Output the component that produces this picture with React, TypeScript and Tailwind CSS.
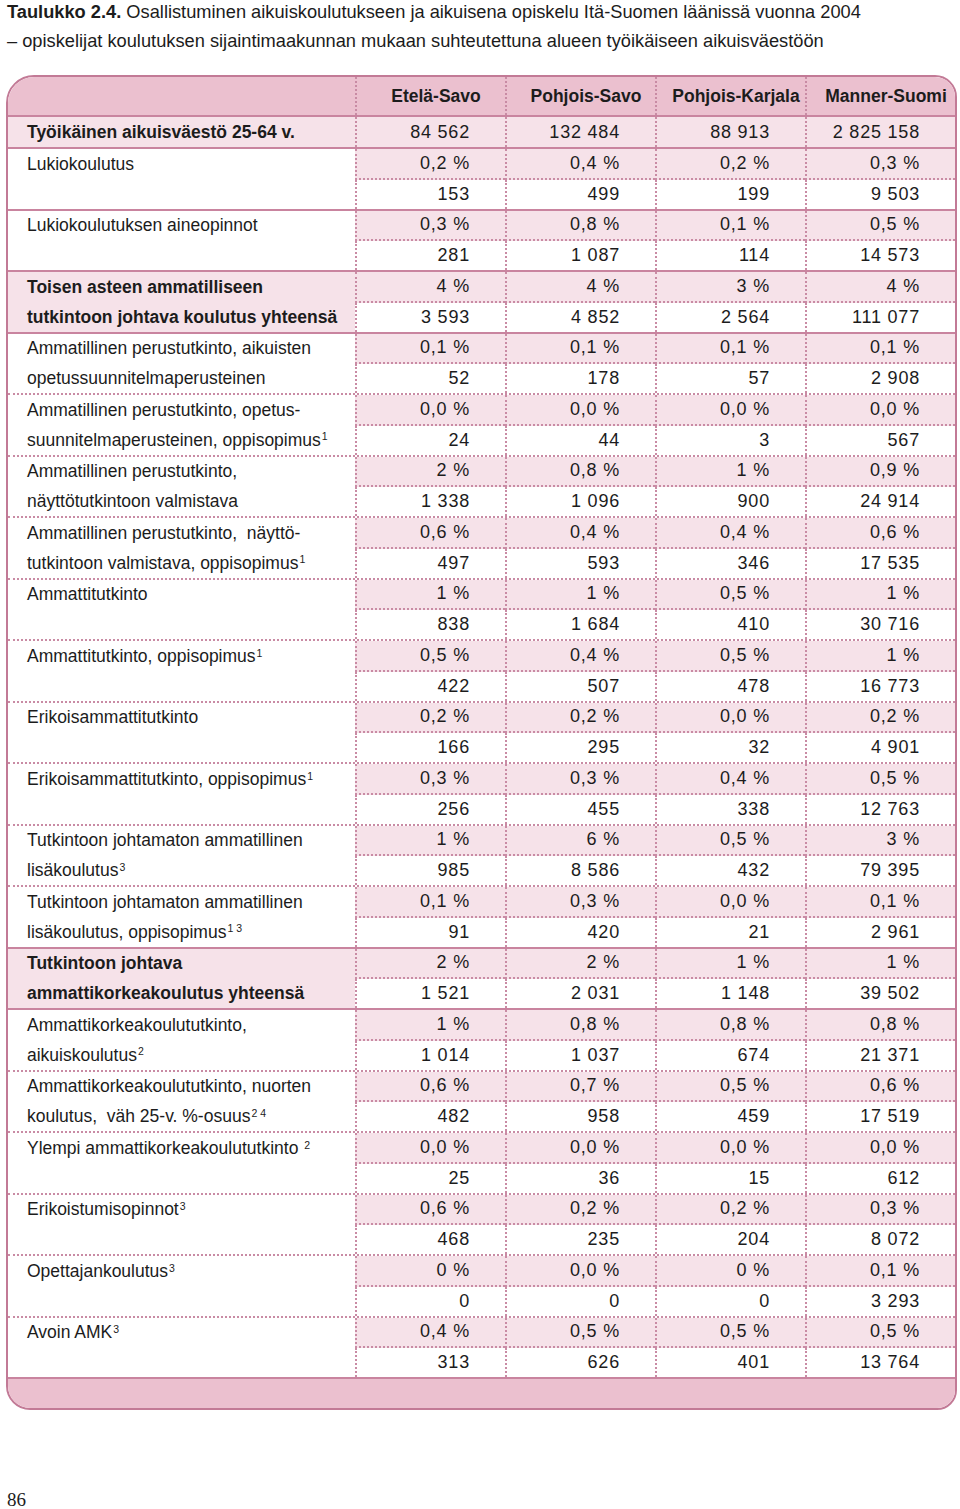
import React from "react";

type Item = {
  lines: React.ReactNode[];
  bold?: boolean;
  pct: string[];
  cnt: string[];
  solidTop?: boolean;
};

const S = ({ children }: { children: React.ReactNode }) => (
  <sup className="text-[10.5px] ml-[1px]">{children}</sup>
);

const items: Item[] = [
  { lines: ["Lukiokoulutus"], pct: ["0,2 %", "0,4 %", "0,2 %", "0,3 %"], cnt: ["153", "499", "199", "9 503"], solidTop: true },
  { lines: ["Lukiokoulutuksen aineopinnot"], pct: ["0,3 %", "0,8 %", "0,1 %", "0,5 %"], cnt: ["281", "1 087", "114", "14 573"], solidTop: true },
  { lines: ["Toisen asteen ammatilliseen", "tutkintoon johtava koulutus yhteensä"], bold: true, pct: ["4 %", "4 %", "3 %", "4 %"], cnt: ["3 593", "4 852", "2 564", "111 077"], solidTop: true },
  { lines: ["Ammatillinen perustutkinto, aikuisten", "opetussuunnitelmaperusteinen"], pct: ["0,1 %", "0,1 %", "0,1 %", "0,1 %"], cnt: ["52", "178", "57", "2 908"], solidTop: true },
  { lines: ["Ammatillinen perustutkinto, opetus-", <>suunnitelmaperusteinen, oppisopimus<S>1</S></>], pct: ["0,0 %", "0,0 %", "0,0 %", "0,0 %"], cnt: ["24", "44", "3", "567"] },
  { lines: ["Ammatillinen perustutkinto,", "näyttötutkintoon valmistava"], pct: ["2 %", "0,8 %", "1 %", "0,9 %"], cnt: ["1 338", "1 096", "900", "24 914"] },
  { lines: ["Ammatillinen perustutkinto,\u00a0 näyttö-", <>tutkintoon valmistava, oppisopimus<S>1</S></>], pct: ["0,6 %", "0,4 %", "0,4 %", "0,6 %"], cnt: ["497", "593", "346", "17 535"] },
  { lines: ["Ammattitutkinto"], pct: ["1 %", "1 %", "0,5 %", "1 %"], cnt: ["838", "1 684", "410", "30 716"] },
  { lines: [<>Ammattitutkinto, oppisopimus<S>1</S></>], pct: ["0,5 %", "0,4 %", "0,5 %", "1 %"], cnt: ["422", "507", "478", "16 773"] },
  { lines: ["Erikoisammattitutkinto"], pct: ["0,2 %", "0,2 %", "0,0 %", "0,2 %"], cnt: ["166", "295", "32", "4 901"] },
  { lines: [<>Erikoisammattitutkinto, oppisopimus<S>1</S></>], pct: ["0,3 %", "0,3 %", "0,4 %", "0,5 %"], cnt: ["256", "455", "338", "12 763"] },
  { lines: ["Tutkintoon johtamaton ammatillinen", <>lisäkoulutus<S>3</S></>], pct: ["1 %", "6 %", "0,5 %", "3 %"], cnt: ["985", "8 586", "432", "79 395"] },
  { lines: ["Tutkintoon johtamaton ammatillinen", <>lisäkoulutus, oppisopimus<S>1 3</S></>], pct: ["0,1 %", "0,3 %", "0,0 %", "0,1 %"], cnt: ["91", "420", "21", "2 961"] },
  { lines: ["Tutkintoon johtava", "ammattikorkeakoulutus yhteensä"], bold: true, pct: ["2 %", "2 %", "1 %", "1 %"], cnt: ["1 521", "2 031", "1 148", "39 502"], solidTop: true },
  { lines: ["Ammattikorkeakoulututkinto,", <>aikuiskoulutus<S>2</S></>], pct: ["1 %", "0,8 %", "0,8 %", "0,8 %"], cnt: ["1 014", "1 037", "674", "21 371"], solidTop: true },
  { lines: ["Ammattikorkeakoulututkinto, nuorten", <>koulutus,&nbsp; väh 25-v. %-osuus<S>2 4</S></>], pct: ["0,6 %", "0,7 %", "0,5 %", "0,6 %"], cnt: ["482", "958", "459", "17 519"] },
  { lines: [<>Ylempi ammattikorkeakoulututkinto&nbsp;<S>2</S></>], pct: ["0,0 %", "0,0 %", "0,0 %", "0,0 %"], cnt: ["25", "36", "15", "612"] },
  { lines: [<>Erikoistumisopinnot<S>3</S></>], pct: ["0,6 %", "0,2 %", "0,2 %", "0,3 %"], cnt: ["468", "235", "204", "8 072"] },
  { lines: [<>Opettajankoulutus<S>3</S></>], pct: ["0 %", "0,0 %", "0 %", "0,1 %"], cnt: ["0", "0", "0", "3 293"] },
  { lines: [<>Avoin AMK<S>3</S></>], pct: ["0,4 %", "0,5 %", "0,5 %", "0,5 %"], cnt: ["313", "626", "401", "13 764"] },
];

const headers = ["Etelä-Savo", "Pohjois-Savo", "Pohjois-Karjala", "Manner-Suomi"];
const totals = ["84 562", "132 484", "88 913", "2 825 158"];

const NUM = "text-[18px] tracking-[0.8px] pr-[35px] flex items-center justify-end";

function ItemRow({ item }: { item: Item }) {
  return (
    <div
      className={
        "grid grid-cols-[347px_150px_150px_150px_150px] h-[61.5px] border-t-2 " +
        (item.solidTop ? "border-[#c9849f]" : "border-dotted border-[#c98ba4]")
      }
    >
      <div className={"flex flex-col pl-[19px] text-[17.5px] " + (item.bold ? "bg-[#f6e2e9] font-bold" : "")}>
        <div className="flex-1 flex items-center whitespace-nowrap">
          <span>{item.lines[0]}</span>
        </div>
        <div className="flex-1 flex items-center whitespace-nowrap">
          <span>{item.lines[1] ?? ""}</span>
        </div>
      </div>
      {item.pct.map((p, i) => (
        <div key={i} className="flex flex-col">
          <div className={"flex-1 bg-[#f6e2e9] border-l-2 border-b-2 border-dotted border-[#c98ba4] " + NUM}>{p}</div>
          <div className={"flex-1 bg-white border-l-2 border-dotted border-[#c98ba4] " + NUM}>{item.cnt[i]}</div>
        </div>
      ))}
    </div>
  );
}

export default function App() {
  return (
    <div className="w-[960px] h-[1509px] bg-white font-['Liberation_Sans',Arial,sans-serif] text-[#1c1c1c] overflow-hidden">
      <div className="pl-[7px] text-[18.25px] leading-[24px] whitespace-nowrap">
        <span className="font-bold">Taulukko 2.4.</span> Osallistuminen aikuiskoulutukseen ja aikuisena opiskelu Itä-Suomen läänissä vuonna 2004
      </div>
      <div className="pl-[7px] mt-[5px] text-[18.25px] leading-[24px] whitespace-nowrap">
        – opiskelijat koulutuksen sijaintimaakunnan mukaan suhteutettuna alueen työikäiseen aikuisväestöön
      </div>

      <div className="mt-[22px] ml-[6px] w-[951px] border-2 border-[#c27a96] rounded-tl-[28px] rounded-tr-[22px] rounded-bl-[24px] rounded-br-[20px] overflow-hidden">
        <div className="grid grid-cols-[347px_150px_150px_150px_150px] h-[40px] bg-[#ebc0cf] border-b-2 border-[#c9849f]">
          <div />
          {headers.map((h) => (
            <div key={h} className="border-l-2 border-dotted border-[#c88ba4] flex items-center justify-center pl-[10px] text-[17.5px] font-bold whitespace-nowrap">
              {h}
            </div>
          ))}
        </div>
        <div className="grid grid-cols-[347px_150px_150px_150px_150px] h-[30px] bg-[#f6e2e9]">
          <div className="pl-[19px] flex items-center text-[17.5px] font-bold whitespace-nowrap">Työikäinen aikuisväestö 25-64 v.</div>
          {totals.map((t) => (
            <div key={t} className={"border-l-2 border-dotted border-[#c98ba4] " + NUM}>{t}</div>
          ))}
        </div>
        {items.map((it, i) => (
          <ItemRow key={i} item={it} />
        ))}
        <div className="h-[31px] bg-[#ebc0cf] border-t-2 border-[#c9849f]" />
      </div>

      <div className="mt-[80px] pl-[7px] font-['Liberation_Serif',serif] text-[19px] leading-[20px]">86</div>
    </div>
  );
}
